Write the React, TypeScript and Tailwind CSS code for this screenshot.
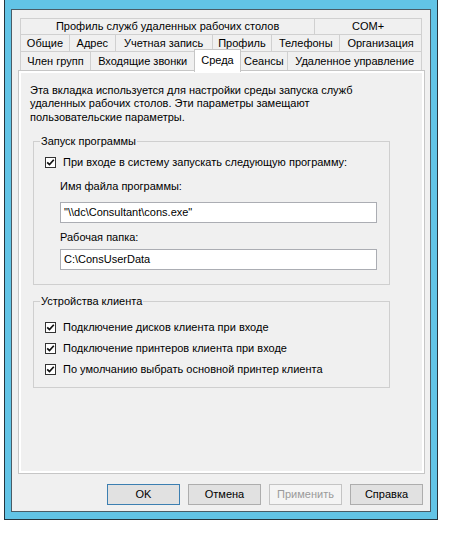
import React from "react";

const FONT = { fontFamily: '"Liberation Sans", Arial, sans-serif' };

const ROW1 = [
  { label: "Профиль служб удаленных рабочих столов", w: "w-[295px]" },
  { label: "COM+", w: "w-[107px]" },
];

const ROW2 = [
  { label: "Общие", w: "w-[49px]" },
  { label: "Адрес", w: "w-[46px]" },
  { label: "Учетная запись", w: "w-[97px]" },
  { label: "Профиль", w: "w-[60px]" },
  { label: "Телефоны", w: "w-[68px]" },
  { label: "Организация", w: "w-[82px]" },
];

const ROW3 = [
  { label: "Член групп", w: "w-[70px]" },
  { label: "Входящие звонки", w: "w-[105px]" },
  { label: "Среда", w: "w-[45px]", active: true },
  { label: "Сеансы", w: "w-[48px]" },
  { label: "Удаленное управление", w: "w-[134px]" },
];

type Tab = { label: string; w: string; active?: boolean };

function TabRow({ tabs, h }: { tabs: Tab[]; h: string }) {
  return (
    <div className={`flex border-t border-l border-[#d0d0d0] ${h}`}>
      {tabs.map((t) => (
        <div
          key={t.label}
          className={`relative flex items-center justify-center border-r border-[#d0d0d0] bg-[#f0f0f0] text-[11px] text-black ${t.w}`}
        >
          {t.active ? (
            <div className="absolute -left-[2px] -right-[2px] -top-[3px] -bottom-[2px] z-10 flex items-center justify-center border-x border-t border-[#c6c6c6] bg-white pb-[1px]">
              {t.label}
            </div>
          ) : (
            t.label
          )}
        </div>
      ))}
    </div>
  );
}

function Check({ label }: { label: string }) {
  return (
    <div className="flex h-[13px] items-center">
      <span className="flex h-[11px] w-[11px] items-center justify-center border border-[#333333] bg-white">
        <svg width="9" height="9" viewBox="0 0 9 9">
          <path d="M1.2 4.3 L3.5 6.6 L7.8 1.8" fill="none" stroke="#111" strokeWidth="1.7" />
        </svg>
      </span>
      <span className="ml-[7px] text-[11px] leading-[13px] text-black">{label}</span>
    </div>
  );
}

function Btn({ label, primary, disabled }: { label: string; primary?: boolean; disabled?: boolean }) {
  const cls = disabled
    ? "border-[#c4c4c4] bg-[#f4f4f4] text-[#9a9a9a]"
    : primary
      ? "border-[#3c7fb1] bg-[#e1e1e1] text-black"
      : "border-[#adadad] bg-[#e1e1e1] text-black";
  return (
    <div className={`flex h-[21px] w-[73px] items-center justify-center border text-[11px] ${cls}`}>
      {label}
    </div>
  );
}

export default function App() {
  return (
    <div className="h-[535px] w-[449px] bg-white" style={FONT}>
      <div className="ml-[4px] w-[434px] border-x border-b border-[#26343d] bg-[#62c4e6] px-[6px] pt-[9px] pb-[7px]">
        <div className="h-[503px] border border-[#4a5c66] bg-[#f0f0f0] pt-[8px]">
          {/* tabs */}
          <div className="ml-[8px] w-[402px]">
            <TabRow tabs={ROW1} h="h-[16px]" />
            <TabRow tabs={ROW2} h="h-[17px]" />
            <TabRow tabs={ROW3} h="h-[19px]" />
          </div>

          {/* panel */}
          <div className="ml-[6px] h-[404px] w-[407px] border border-[#c6c6c6] bg-white p-[2px]">
            <div className="h-full bg-[#f0f0f0] pt-[11px]">
              <p className="ml-[9px] text-[11px] leading-[13.3px] text-black">
                Эта вкладка используется для настройки среды запуска служб
                <br />
                удаленных рабочих столов. Эти параметры замещают
                <br />
                пользовательские параметры.
              </p>

              <fieldset className="mt-[11px] ml-[12px] w-[357px] border border-[#cfcfcf] pb-[14px]">
                <legend className="ml-[6px] px-[1px] text-[11px] leading-[13px]">Запуск программы</legend>
                <div className="mt-[8px] pl-[11px]">
                  <Check label="При входе в систему запускать следующую программу:" />
                </div>
                <div className="pl-[26px]">
                  <div className="mt-[11px] text-[11px] leading-[13px]">Имя файла программы:</div>
                  <div className="mt-[9px] flex h-[21px] w-[317px] items-center border border-[#abadb3] bg-white pl-[3px] text-[11px]">
                    "\\dc\Consultant\cons.exe"
                  </div>
                  <div className="mt-[8px] text-[11px] leading-[13px]">Рабочая папка:</div>
                  <div className="mt-[5px] flex h-[21px] w-[317px] items-center border border-[#abadb3] bg-white pl-[3px] text-[11px]">
                    C:\ConsUserData
                  </div>
                </div>
              </fieldset>

              <fieldset className="mt-[10px] ml-[12px] w-[357px] border border-[#cfcfcf] pb-[11px]">
                <legend className="ml-[6px] px-[1px] text-[11px] leading-[13px]">Устройства клиента</legend>
                <div className="mt-[13px] flex flex-col gap-[8px] pl-[11px]">
                  <Check label="Подключение дисков клиента при входе" />
                  <Check label="Подключение принтеров клиента при входе" />
                  <Check label="По умолчанию выбрать основной принтер клиента" />
                </div>
              </fieldset>
            </div>
          </div>

          {/* buttons */}
          <div className="mt-[10px] ml-[95px] flex gap-[8px]">
            <Btn label="OK" primary />
            <Btn label="Отмена" />
            <Btn label="Применить" disabled />
            <Btn label="Справка" />
          </div>
        </div>
      </div>
    </div>
  );
}
